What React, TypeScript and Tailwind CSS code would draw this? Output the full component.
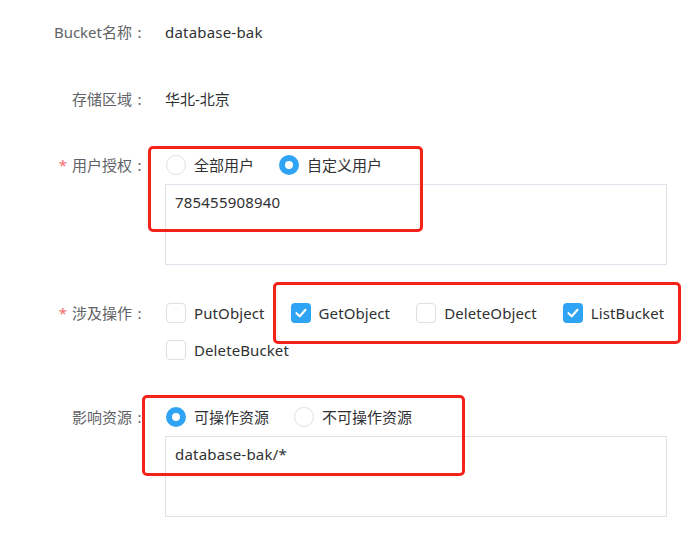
import React from "react";

const font = { fontFamily: '"Noto Sans", "Noto Sans CJK SC", sans-serif' };

function Label({ text, required }: { text: string; required?: boolean }) {
  return (
    <div className="w-[147px] shrink-0 text-right text-[15px] leading-5 text-[#606266]">
      {required && <span className="mr-[5px] text-[#f56c6c]">*</span>}
      {text}
      <span className="inline-block w-[15px] text-center">:</span>
    </div>
  );
}

function Radio({ label, checked }: { label: string; checked?: boolean }) {
  return (
    <label className="flex items-center gap-2 text-[15px] leading-5 text-[#303133]">
      {checked ? (
        <span className="flex h-5 w-5 items-center justify-center rounded-full bg-[#2fa4f4]">
          <span className="h-2 w-2 rounded-full bg-white" />
        </span>
      ) : (
        <span className="h-5 w-5 rounded-full border border-[#dcdfe6] bg-white" />
      )}
      <span>{label}</span>
    </label>
  );
}

function Checkbox({ label, checked }: { label: string; checked?: boolean }) {
  return (
    <label className="flex items-center gap-2 text-[15px] leading-5 tracking-[0.1px] text-[#303133]">
      {checked ? (
        <span className="flex h-5 w-5 items-center justify-center rounded-[4px] bg-[#2fa4f4]">
          <svg width="14" height="14" viewBox="0 0 14 14" fill="none">
            <polyline points="2.5,7.2 5.8,10.2 11.5,3.8" stroke="white" strokeWidth="2.2" strokeLinecap="round" strokeLinejoin="round" />
          </svg>
        </span>
      ) : (
        <span className="h-5 w-5 rounded-[4px] border border-[#dcdfe6] bg-white" />
      )}
      <span>{label}</span>
    </label>
  );
}

function TextBox({ value }: { value: string }) {
  return (
    <div className="mt-[9px] h-[81px] w-[502px] border border-[#dce3ea] px-[9px] pt-[7px] text-[15px] leading-5 tracking-[0.2px] text-[#303133]">
      {value}
    </div>
  );
}

export default function App() {
  return (
    <div className="relative h-[536px] w-[686px] overflow-hidden bg-white" style={font}>
      <div className="flex flex-col pt-[22px]">
        <div className="flex">
          <Label text="Bucket名称" />
          <div className="ml-[18px] text-[15px] leading-5 tracking-[0.2px] text-[#303133]">database-bak</div>
        </div>

        <div className="mt-[47px] flex">
          <Label text="存储区域" />
          <div className="ml-[18px] text-[15px] leading-5 text-[#303133]">华北-北京</div>
        </div>

        <div className="mt-[46px] flex">
          <Label text="用户授权" required />
          <div className="ml-[19px] flex flex-col">
            <div className="flex gap-[25px]">
              <Radio label="全部用户" />
              <Radio label="自定义用户" checked />
            </div>
            <div className="-ml-px">
              <TextBox value="785455908940" />
            </div>
          </div>
        </div>

        <div className="mt-[38px] flex">
          <Label text="涉及操作" required />
          <div className="ml-[19px] flex flex-col gap-[17px]">
            <div className="flex gap-[26px]">
              <Checkbox label="PutObject" />
              <Checkbox label="GetObject" checked />
              <Checkbox label="DeleteObject" />
              <Checkbox label="ListBucket" checked />
            </div>
            <div className="flex">
              <Checkbox label="DeleteBucket" />
            </div>
          </div>
        </div>

        <div className="mt-[47px] flex">
          <Label text="影响资源" />
          <div className="ml-[19px] flex flex-col">
            <div className="flex gap-[25px]">
              <Radio label="可操作资源" checked />
              <Radio label="不可操作资源" />
            </div>
            <div className="-ml-px">
              <TextBox value="database-bak/*" />
            </div>
          </div>
        </div>
      </div>

      {/* annotation boxes */}
      <div className="absolute left-[148px] top-[146px] h-[86px] w-[275px] rounded-[5px] border-[3px] border-[#f5221b]" />
      <div className="absolute left-[273px] top-[282px] h-[62px] w-[408px] rounded-[5px] border-[3px] border-[#f5221b]" />
      <div className="absolute left-[142px] top-[395px] h-[81px] w-[323px] rounded-[5px] border-[3px] border-[#f5221b]" />
    </div>
  );
}
